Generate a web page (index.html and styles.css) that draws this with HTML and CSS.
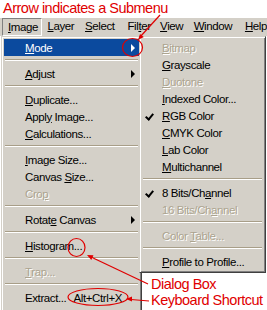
FILE: index.html
```html
<!DOCTYPE html>
<html lang="en">
<head>
  <meta charset="UTF-8">
  <title>Image menu</title>
  <link rel="stylesheet" href="styles.css">
</head>
<body>

<div class="page">
  <div class="note-title">Arrow indicates a Submenu</div>

  <!-- Barre de menus -->
  <div class="menubar">
    <span class="bar-item open"><u>I</u>mage</span>
    <span class="bar-item"><u>L</u>ayer</span>
    <span class="bar-item"><u>S</u>elect</span>
    <span class="bar-item">Fil<u>t</u>er</span>
    <span class="bar-item"><u>V</u>iew</span>
    <span class="bar-item"><u>W</u>indow</span>
    <span class="bar-item"><u>H</u>elp</span>
  </div>

  <div class="menus">
    <!-- Menu Image -->
    <div class="menu image-menu">
      <div class="item active sub"><span class="label"><u>M</u>ode</span><span class="arrow"></span></div>
      <div class="sep"></div>
      <div class="item sub"><span class="label"><u>A</u>djust</span><span class="arrow"></span></div>
      <div class="sep"></div>
      <div class="item"><span class="label"><u>D</u>uplicate...</span></div>
      <div class="item"><span class="label">Appl<u>y</u> Image...</span></div>
      <div class="item"><span class="label"><u>C</u>alculations...</span></div>
      <div class="sep"></div>
      <div class="item"><span class="label"><u>I</u>mage Size...</span></div>
      <div class="item"><span class="label">Canvas <u>S</u>ize...</span></div>
      <div class="item disabled"><span class="label">Cro<u>p</u></span></div>
      <div class="sep"></div>
      <div class="item sub"><span class="label">Rotat<u>e</u> Canvas</span><span class="arrow"></span></div>
      <div class="sep"></div>
      <div class="item"><span class="label"><u>H</u>istogram...</span></div>
      <div class="sep"></div>
      <div class="item disabled"><span class="label"><u>T</u>rap...</span></div>
      <div class="sep"></div>
      <div class="item"><span class="label">Extract...</span><span class="key">Alt+Ctrl+X</span></div>
    </div>

    <!-- Sous-menu Mode -->
    <div class="menu mode-menu">
      <div class="item disabled"><span class="label"><u>B</u>itmap</span></div>
      <div class="item"><span class="label"><u>G</u>rayscale</span></div>
      <div class="item disabled"><span class="label"><u>D</u>uotone</span></div>
      <div class="item"><span class="label"><u>I</u>ndexed Color...</span></div>
      <div class="item checked"><span class="label"><u>R</u>GB Color</span></div>
      <div class="item"><span class="label"><u>C</u>MYK Color</span></div>
      <div class="item"><span class="label"><u>L</u>ab Color</span></div>
      <div class="item"><span class="label"><u>M</u>ultichannel</span></div>
      <div class="sep"></div>
      <div class="item checked"><span class="label">8 Bits/Ch<u>a</u>nnel</span></div>
      <div class="item disabled"><span class="label">16 Bits/Ch<u>a</u>nnel</span></div>
      <div class="sep"></div>
      <div class="item disabled"><span class="label">Color <u>T</u>able...</span></div>
      <div class="sep"></div>
      <div class="item"><span class="label"><u>P</u>rofile to Profile...</span></div>
    </div>
  </div>

  <!-- Annotations en rouge -->
  <svg class="marks" width="267" height="310" viewBox="0 0 267 310">
    <g fill="none" stroke="#e00000" stroke-width="1.2">
      <line x1="160" y1="15" x2="140" y2="37"/>
      <ellipse cx="132.5" cy="47.5" rx="10" ry="9"/>
      <line x1="148" y1="284" x2="91" y2="257"/>
      <ellipse cx="76.5" cy="247.5" rx="8.5" ry="9"/>
      <line x1="149" y1="301" x2="131" y2="299.5"/>
      <ellipse cx="98" cy="297" rx="30" ry="8.5"/>
    </g>
    <g fill="#e00000">
      <polygon points="138,40 143.8,37.1 140,33.9"/>
      <polygon points="87,255 93.5,255.3 91.3,259.9"/>
      <polygon points="126,299 132,296.5 132,301.5"/>
    </g>
  </svg>
  <div class="callout dialog-note">Dialog Box</div>
  <div class="callout key-note">Keyboard Shortcut</div>
</div>

</body>
</html>
```

FILE: styles.css
```css
body {
  margin: 0;
  background-color: #ffffff;
}
.page {
  position: relative;
  width: 267px;
  height: 310px;
  overflow: hidden;
  background-color: #ffffff;
  font-family: "Liberation Sans", Arial, sans-serif;
}
.note-title {
  height: 18px;
  line-height: 17px;
  padding-left: 3px;
  font-size: 14.5px;
  letter-spacing: -0.5px;
  color: #e00000;
}

/* Barre de menus */
.menubar {
  display: flex;
  height: 18px;
  background-color: #d4d0c8;
  font-size: 11.5px;
  letter-spacing: -0.4px;
}
.bar-item {
  box-sizing: border-box;
  padding-left: 6px;
  line-height: 17px;
  color: #000000;
}
.bar-item:nth-child(1) { margin-left: 2px; width: 40px; }
.bar-item:nth-child(2) { width: 38px; }
.bar-item:nth-child(3) { width: 43px; }
.bar-item:nth-child(4) { width: 33px; }
.bar-item:nth-child(5) { width: 34px; }
.bar-item:nth-child(6) { width: 52px; }
.bar-item.open {
  border-top: 1px solid #808080;
  border-left: 1px solid #808080;
  border-right: 1px solid #ffffff;
  border-bottom: 1px solid #ffffff;
  padding-left: 5px;
}

/* Menus déroulants */
.menus {
  display: flex;
  align-items: flex-start;
}
.menu {
  box-sizing: border-box;
  background-color: #d4d0c8;
  border-top: 1px solid #d4d0c8;
  border-left: 1px solid #d4d0c8;
  border-right: 1px solid #404040;
  border-bottom: 1px solid #404040;
  box-shadow: inset 1px 1px #ffffff, inset -1px -1px #808080;
  padding: 2px;
  font-size: 11.5px;
  letter-spacing: -0.4px;
}
.image-menu {
  margin-left: 1px;
  width: 141px;
  height: 290px;
}
.mode-menu {
  margin-left: -3px;
  width: 127px;
}
.item {
  display: flex;
  align-items: center;
  height: 17px;
  padding-left: 21px;
  color: #000000;
  white-space: nowrap;
}
.mode-menu .item {
  position: relative;
  padding-left: 20px;
}
.item.active {
  background-color: #0b4a9e;
  color: #ffffff;
}
.item.disabled {
  color: #aca48f;
  text-shadow: 1px 1px #ffffff;
}
.arrow {
  margin-left: auto;
  margin-right: 4px;
  width: 0;
  height: 0;
  border-top: 4px solid transparent;
  border-bottom: 4px solid transparent;
  border-left: 4px solid #000000;
}
.item.active .arrow {
  border-left-color: #ffffff;
}
.key {
  margin-left: auto;
  margin-right: 17px;
}
.item.checked::before {
  content: "";
  position: absolute;
  left: 5px;
  top: 5px;
  width: 3px;
  height: 6px;
  border-right: 2px solid #000000;
  border-bottom: 2px solid #000000;
  transform: rotate(40deg);
}
.sep {
  height: 2px;
  margin: 3px 1px 4px;
  border-top: 1px solid #a89e88;
  background-color: #ffffff;
  height: 1px;
}

/* Annotations */
.marks {
  position: absolute;
  top: 0;
  left: 0;
  pointer-events: none;
}
.callout {
  position: absolute;
  left: 151px;
  font-size: 14.5px;
  letter-spacing: -0.5px;
  color: #e00000;
  line-height: 16px;
}
.dialog-note {
  top: 276px;
}
.key-note {
  top: 292px;
}
```
